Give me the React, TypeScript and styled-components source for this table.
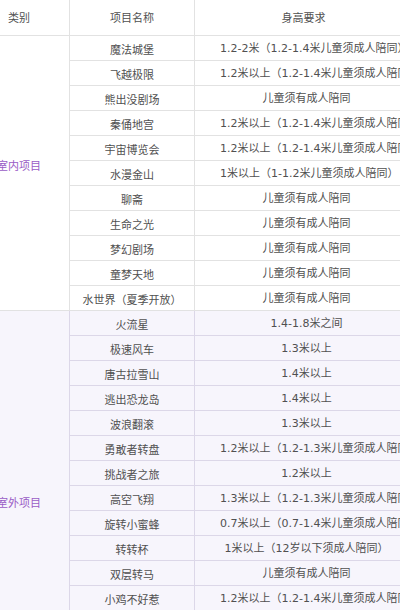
import React from 'react';
import styled, { createGlobalStyle } from 'styled-components';

const GlobalStyle = createGlobalStyle`
  html, body {
    margin: 0;
    padding: 0;
    width: 400px;
    height: 610px;
    overflow: hidden;
    background: #ffffff;
  }
  body {
    font-family: "DejaVu Sans", "Noto Sans CJK SC", sans-serif;
    font-size: 11px;
    color: #505050;
    text-spacing-trim: space-all;
  }
`;

const Table = styled.div`
  width: 448px;
  margin-left: -31px;
  display: flex;
  flex-direction: column;
`;

const HeaderRow = styled.div`
  display: grid;
  grid-template-columns: 101px 125px 222px;
  height: 36px;
  box-sizing: border-box;
  border-bottom: 1px solid #e2e2e2;
`;

const HeaderCell = styled.div<{ $last?: boolean; $padRight?: number }>`
  display: flex;
  align-items: center;
  justify-content: center;
  white-space: nowrap;
  padding-bottom: 1px;
  padding-right: ${p => p.$padRight ?? 0}px;
  border-right: ${p => (p.$last ? 'none' : '1px solid #e2e2e2')};
`;

const Group = styled.div<{ $tinted?: boolean }>`
  display: flex;
  background: ${p => (p.$tinted ? '#f7f5fc' : '#ffffff')};
`;

const CategoryCell = styled.div<{ $offset: number; $tinted?: boolean }>`
  width: 101px;
  flex: none;
  box-sizing: border-box;
  padding-top: ${p => p.$offset}px;
  text-align: center;
  color: #9a5cc6;
  border-right: 1px solid ${p => (p.$tinted ? '#dcd7e8' : '#e2e2e2')};
  border-bottom: 1px solid ${p => (p.$tinted ? '#dcd7e8' : '#e2e2e2')};
  line-height: 16px;
`;

const Rows = styled.div`
  display: flex;
  flex-direction: column;
`;

const Row = styled.div<{ $tinted?: boolean }>`
  display: grid;
  grid-template-columns: 125px 222px;
  height: 25px;
  box-sizing: border-box;
  border-bottom: 1px solid ${p => (p.$tinted ? '#dcd7e8' : '#e2e2e2')};
`;

const NameCell = styled.div<{ $tinted?: boolean }>`
  display: flex;
  align-items: center;
  justify-content: center;
  white-space: nowrap;
  padding-top: 1px;
  border-right: 1px solid ${p => (p.$tinted ? '#dcd7e8' : '#e2e2e2')};
`;

/* overflowing text starts at the content edge, like the original table cell */
const ReqCell = styled.div`
  min-width: 0;
  padding: 1px 24px 0 25px;
  text-align: center;
  white-space: nowrap;
  line-height: 23px;
`;

type Item = [string, string];

const indoor: Item[] = [
  ['魔法城堡', '1.2-2米（1.2-1.4米儿童须成人陪同）'],
  ['飞越极限', '1.2米以上（1.2-1.4米儿童须成人陪同）'],
  ['熊出没剧场', '儿童须有成人陪同'],
  ['秦俑地宫', '1.2米以上（1.2-1.4米儿童须成人陪同）'],
  ['宇宙博览会', '1.2米以上（1.2-1.4米儿童须成人陪同）'],
  ['水漫金山', '1米以上（1-1.2米儿童须成人陪同）'],
  ['聊斋', '儿童须有成人陪同'],
  ['生命之光', '儿童须有成人陪同'],
  ['梦幻剧场', '儿童须有成人陪同'],
  ['童梦天地', '儿童须有成人陪同'],
  ['水世界（夏季开放）', '儿童须有成人陪同'],
];

const outdoor: Item[] = [
  ['火流星', '1.4-1.8米之间'],
  ['极速风车', '1.3米以上'],
  ['唐古拉雪山', '1.4米以上'],
  ['逃出恐龙岛', '1.4米以上'],
  ['波浪翻滚', '1.3米以上'],
  ['勇敢者转盘', '1.2米以上（1.2-1.3米儿童须成人陪同）'],
  ['挑战者之旅', '1.2米以上'],
  ['高空飞翔', '1.3米以上（1.2-1.3米儿童须成人陪同）'],
  ['旋转小蜜蜂', '0.7米以上（0.7-1.4米儿童须成人陪同）'],
  ['转转杯', '1米以上（12岁以下须成人陪同）'],
  ['双层转马', '儿童须有成人陪同'],
  ['小鸡不好惹', '1.2米以上（1.2-1.4米儿童须成人陪同）'],
];

const ItemGroup: React.FC<{ label: string; items: Item[]; offset: number; tinted?: boolean }> = ({
  label,
  items,
  offset,
  tinted,
}) => (
  <Group $tinted={tinted}>
    <CategoryCell $offset={offset} $tinted={tinted}>
      {label}
    </CategoryCell>
    <Rows>
      {items.map(([name, req]) => (
        <Row key={name} $tinted={tinted}>
          <NameCell $tinted={tinted}>{name}</NameCell>
          <ReqCell>{req}</ReqCell>
        </Row>
      ))}
    </Rows>
  </Group>
);

const App: React.FC = () => (
  <>
    <GlobalStyle />
    <Table>
      <HeaderRow>
        <HeaderCell>类别</HeaderCell>
        <HeaderCell>项目名称</HeaderCell>
        <HeaderCell $last $padRight={5}>身高要求</HeaderCell>
      </HeaderRow>
      <ItemGroup label="室内项目" items={indoor} offset={123} />
      <ItemGroup label="室外项目" items={outdoor} offset={185} tinted />
    </Table>
  </>
);

export default App;
